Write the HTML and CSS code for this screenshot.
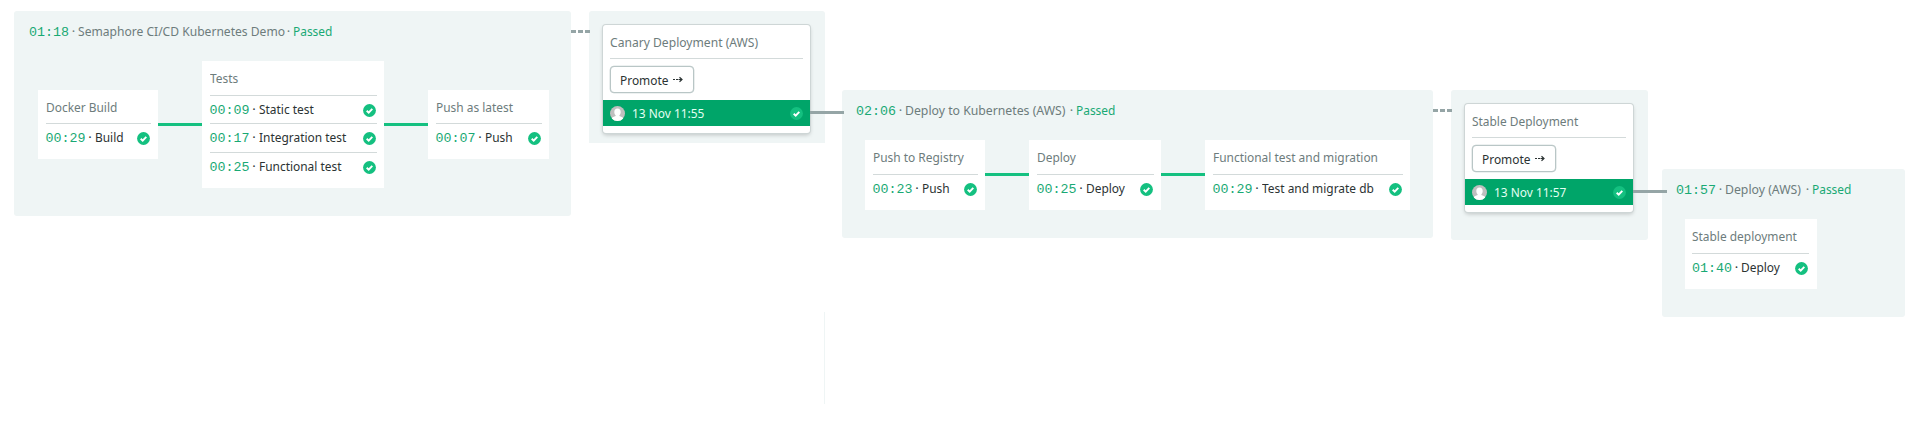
FILE: index.html
```
<!DOCTYPE html>
<html lang="en">
<head>
<meta charset="utf-8">
<title>Semaphore CI/CD Kubernetes Demo</title>
<link rel="stylesheet" href="styles.css">
</head>
<body>
<svg class="defs" width="0" height="0">
  <symbol id="check" viewBox="0 0 13 13"><circle cx="6.5" cy="6.5" r="6.4" fill="#14c080"/><path d="M3.7 6.7 5.7 8.6 9.3 4.8" fill="none" stroke="#fff" stroke-width="1.9"/></symbol>
  <symbol id="avatar" viewBox="0 0 15 15"><circle cx="7.5" cy="7.5" r="7.5" fill="#bfbfbf"/><path d="M7.5 2.6c2 0 3.2 1.4 3.2 3.3 0 1.5-.6 2.7-1.3 3.4v.8l2.9 1.1c.5.2.8.7.9 1.2A7.5 7.5 0 0 1 7.5 15a7.5 7.5 0 0 1-5.700-2.600c.1-.5.4-1 .9-1.200l2.900-1.100v-.8C4.900 8.600 4.300 7.400 4.300 5.900c0-1.900 1.200-3.300 3.200-3.300z" fill="#fff"/></symbol>
  <symbol id="arrow" viewBox="0 0 10 7"><path d="M0 3.500h2M3 3.500h2M5.500 3.500H9M6.500 1.200 9 3.500 6.500 5.800" fill="none" stroke="#2b3333" stroke-width="1.200"/></symbol>
</svg>
<main class="workflow">
  <section class="pipeline p1">
    <h1 class="head"><span class="time">01:18</span><i>·</i><span class="name">Semaphore CI/CD Kubernetes Demo</span><i>·</i><b>Passed</b></h1>
    <div class="blocks">
      <div class="block w-120"><h2>Docker Build</h2><p><span class="time">00:29</span><i>·</i><span class="job">Build</span><svg class="check"><use href="#check"/></svg></p></div>
      <div class="wire"></div>
      <div class="block w-182"><h2>Tests</h2><p><span class="time">00:09</span><i>·</i><span class="job">Static test</span><svg class="check"><use href="#check"/></svg></p><p><span class="time">00:17</span><i>·</i><span class="job">Integration test</span><svg class="check"><use href="#check"/></svg></p><p><span class="time">00:25</span><i>·</i><span class="job">Functional test</span><svg class="check"><use href="#check"/></svg></p></div>
      <div class="wire"></div>
      <div class="block w-121"><h2>Push as latest</h2><p><span class="time">00:07</span><i>·</i><span class="job">Push</span><svg class="check"><use href="#check"/></svg></p></div>
    </div>
  </section>
  <div class="dashes"></div>
  <section class="switch s1">
    <div class="target"><h2>Canary Deployment (AWS)</h2><button><span class="label">Promote</span><svg class="arrow"><use href="#arrow"/></svg></button>
      <div class="event"><svg class="avatar"><use href="#avatar"/></svg><span class="job">13 Nov 11:55</span><svg class="check"><use href="#check"/></svg></div></div>
  </section>
  <section class="pipeline p2">
    <h1 class="head"><span class="time">02:06</span><i>·</i><span class="name">Deploy to Kubernetes (AWS)</span><i>·</i><b>Passed</b></h1>
    <div class="blocks">
      <div class="block w-120"><h2>Push to Registry</h2><p><span class="time">00:23</span><i>·</i><span class="job">Push</span><svg class="check"><use href="#check"/></svg></p></div>
      <div class="wire"></div>
      <div class="block w-132"><h2>Deploy</h2><p><span class="time">00:25</span><i>·</i><span class="job">Deploy</span><svg class="check"><use href="#check"/></svg></p></div>
      <div class="wire"></div>
      <div class="block w-205"><h2>Functional test and migration</h2><p><span class="time">00:29</span><i>·</i><span class="job">Test and migrate db</span><svg class="check"><use href="#check"/></svg></p></div>
    </div>
  </section>
  <div class="dashes low"></div>
  <section class="switch s2">
    <div class="target"><h2>Stable Deployment</h2><button><span class="label">Promote</span><svg class="arrow"><use href="#arrow"/></svg></button>
      <div class="event"><svg class="avatar"><use href="#avatar"/></svg><span class="job">13 Nov 11:57</span><svg class="check"><use href="#check"/></svg></div></div>
  </section>
  <section class="pipeline p3">
    <h1 class="head"><span class="time">01:57</span><i>·</i><span class="name">Deploy (AWS)</span><i>·</i><b>Passed</b></h1>
    <div class="blocks">
      <div class="block w-132"><h2>Stable deployment</h2><p><span class="time">01:40</span><i>·</i><span class="job">Deploy</span><svg class="check"><use href="#check"/></svg></p></div>
    </div>
  </section>
</main>
<div class="rule"></div>
</body>
</html>
```
FILE: styles.css
```
* { box-sizing: border-box; margin: 0; padding: 0; }
body { height: 426px; background: #fff; overflow: hidden; font: 13px/18px "Noto Sans", sans-serif; color: #2b3333; }
.defs { position: absolute; }
i { font-style: normal; width: 9px; text-align: center; flex: none; }
.workflow { display: flex; align-items: flex-start; height: 301px; margin-top: 11px; padding-left: 14px; }
.pipeline { background: #eff5f5; border-radius: 3px; flex: none; }
.head { display: flex; align-items: baseline; height: 18px; font-size: 13px; font-weight: 400; color: #6d7c7c; white-space: nowrap; }
.head b, .time { font-weight: 400; color: #19a974; }
.time { font-family: "Liberation Mono", monospace; font-size: 13.33px; width: 40px; flex: none; }

/* Condensed label text */
.name, .head b, .job, .label, .block h2, .target h2 { transform: scaleX(var(--fit, .917)); transform-origin: 0 50%; }
.name { flex: none; }
.p1 .name { --fit: .929; width: 206px; }
.p2 .name { --fit: .942; width: 162px; }
.p3 .name { --fit: .942; width: 78px; }

.p1 { width: 557px; height: 205px; padding: 11px 0 0 15px; }
.p2 { width: 591px; height: 148px; margin: 79px 0 0 17px; padding: 11px 0 0 14px; }
.p3 { width: 243px; height: 148px; margin: 158px 0 0 14px; padding: 11px 0 0 14px; }
.blocks { display: flex; align-items: center; margin: 21px 0 0 9px; }
.p3 .blocks { margin-left: 8.5px; }
.block { background: #fff; padding: 0 7.5px 7.5px; flex: none; white-space: nowrap; }
.block h2, .target h2 { font-size: 13px; font-weight: 400; color: #6d7c7c; line-height: 18px; white-space: nowrap; }
.block h2 { height: 33.5px; padding-top: 8px; }
.block p { display: flex; align-items: baseline; height: 28.5px; padding-top: 4px; border-top: 1px solid #d3dada; }
.check { width: 13px; height: 13px; margin: 0 1px 0 auto; flex: none; }
.block .check { align-self: flex-start; margin-top: 4px; }
.w-120 { width: 120px; }
.w-121 { width: 121px; }
.w-132 { width: 132px; }
.w-182 { width: 182px; }
.w-205 { width: 205px; }
.wire { width: 44px; height: 3px; background: #14c080; flex: none; }
.dashes { width: 19px; height: 3px; margin: 19px -1px 0 0; flex: none; z-index: 1; background: repeating-linear-gradient(90deg, #95a5a6 0 5px, transparent 5px 7px); }
.low { margin-top: 98px; }
.switch { background: #eff5f5; flex: none; padding: 13.5px 0 0 14px; }
.s1 { width: 236px; height: 132px; border-radius: 3px 3px 0 0; }
.s2 { width: 197px; height: 150px; margin-top: 79px; border-radius: 3px; }
.target { position: relative; width: 207px; height: 108.5px; border-radius: 3px; background: #fff; box-shadow: 0 0 0 1px #ced6d6, 0 2px 4px rgba(0,0,0,.2); }
.s2 .target { width: 168px; }
.target h2 { height: 33px; margin: 0 7px; padding-top: 8.5px; }
.s1 h2 { --fit: .931; }
.target button { display: flex; align-items: center; position: relative; width: 84px; height: 27px; margin: 8.5px 0 0 7px; padding-left: 9px; font: inherit; color: #2b3333; background: #fff; border: 1px solid #b9c6c6; border-radius: 4px; box-shadow: 0 0 0 .3px #b9c6c6; }
.target h2 + button::before { content: ""; position: absolute; left: -1px; top: -9.5px; width: 193px; height: 1px; background: #d3dada; }
.s2 .target h2 + button::before { width: 154px; }
.label { width: 53px; text-align: left; }
.arrow { width: 10px; height: 7px; flex: none; }
.event { display: flex; align-items: center; height: 26px; margin-top: 7px; padding: 0 6.5px 0 7px; background: #00a569; color: #e3fff3; }
.avatar { width: 15px; height: 15px; margin-right: 6.5px; }
.target::after { content: ""; position: absolute; z-index: 2; left: 100%; top: 86.5px; width: 34px; height: 3px; background: #95a5a6; }
.rule { width: 1px; height: 92px; margin-left: 824px; background: #eff5f5; }
```
